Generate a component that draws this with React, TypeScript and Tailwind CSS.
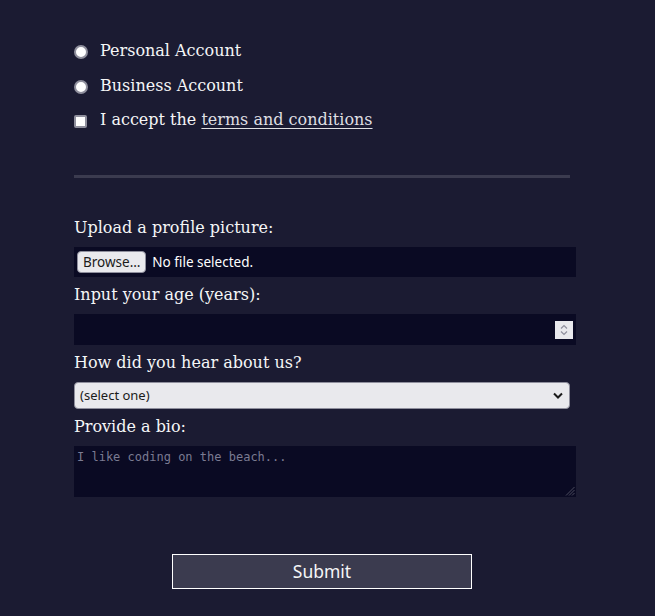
import React from 'react';

const serif = { fontFamily: '"DejaVu Serif", serif' };
const sans = { fontFamily: '"Noto Sans", "Open Sans", sans-serif' };

const Radio: React.FC = () => (
  <span className="w-[14px] h-[14px] rounded-full bg-white border-2 border-[#8f8f9d] shrink-0" />
);

const Check: React.FC = () => (
  <span className="w-[13px] h-[13px] rounded-[2px] bg-white border-2 border-[#8f8f9d] shrink-0" />
);

const Label: React.FC<{ text: string; className?: string }> = ({ text, className = '' }) => (
  <div className={`h-[19px] leading-[19px] text-[16px] text-[#f5f6f7] ${className}`} style={serif}>
    {text}
  </div>
);

export default function App() {
  return (
    <div className="w-[655px] h-[616px] bg-[#1b1b32] overflow-hidden">
      <div className="ml-[74px] w-[502px] pt-[34px] flex flex-col">

        {/* Account type */}
        <div className="w-[496px] flex flex-col border-b-[3px] border-[#3b3b4f] pb-[36px]">
          <div className="h-[35px] flex items-center gap-[12px]">
            <Radio />
            <span className="text-[16px] text-[#f5f6f7] -mt-[2px]" style={serif}>Personal Account</span>
          </div>
          <div className="h-[35px] flex items-center gap-[12px]">
            <Radio />
            <span className="text-[16px] text-[#f5f6f7] -mt-[2px]" style={serif}>Business Account</span>
          </div>
          <div className="h-[35px] flex items-center gap-[13px]">
            <Check />
            <span className="text-[16px] text-[#f5f6f7] -mt-[3px]" style={serif}>
              I accept the <a className="underline underline-offset-[3px] text-[#dfdfe2]">terms and conditions</a>
            </span>
          </div>
        </div>

        {/* Profile details */}
        <div className="flex flex-col pt-[40px]">
          <Label text="Upload a profile picture:" />
          <div className="mt-[10px] h-[30px] bg-[#0a0a23] flex items-center pl-[3px] gap-[6px]">
            <span
              className="h-[22px] px-[5px] flex items-center rounded-[4px] bg-[#e9e9ed] border border-[#8f8f9d] text-[13.5px] text-[#1b1b1b]"
              style={sans}
            >
              Browse…
            </span>
            <span className="text-[13.5px] text-white" style={sans}>No file selected.</span>
          </div>

          <Label text="Input your age (years):" className="mt-[8px]" />
          <div className="mt-[10px] h-[31px] bg-[#0a0a23] flex items-center justify-end pr-[3px]">
            <span className="w-[18px] h-[18px] bg-[#e9e9ed] flex flex-col items-center justify-center gap-[2px]">
              <svg width="8" height="5" viewBox="0 0 8 5" fill="none" stroke="#8f8f9d" strokeWidth="1.2">
                <path d="M1 4.5 L4 1.5 L7 4.5" />
              </svg>
              <svg width="8" height="5" viewBox="0 0 8 5" fill="none" stroke="#8f8f9d" strokeWidth="1.2">
                <path d="M1 0.5 L4 3.5 L7 0.5" />
              </svg>
            </span>
          </div>

          <Label text="How did you hear about us?" className="mt-[8px]" />
          <div
            className="mt-[10px] w-[496px] h-[27px] bg-[#e9e9ed] border border-[#8f8f9d] rounded-[4px] flex items-center justify-between pl-[5px] pr-[6px] text-[13px] text-[#1b1b1b]"
            style={sans}
          >
            <span>(select one)</span>
            <svg width="10" height="7" viewBox="0 0 10 7" fill="none" stroke="#1b1b1b" strokeWidth="2">
              <path d="M1 1.5 L5 5.5 L9 1.5" />
            </svg>
          </div>

          <Label text="Provide a bio:" className="mt-[8px]" />
          <div className="mt-[10px] relative h-[51px]">
            <textarea
              className="w-full h-full bg-[#0a0a23] border border-[#0a0a23] resize-none pl-[2px] pt-[2px] text-[12px] leading-[17px] text-white placeholder:text-[#7b7b92] outline-none"
              style={{ fontFamily: '"DejaVu Sans Mono", monospace' }}
              placeholder="I like coding on the beach..."
            />
            <svg className="absolute right-[1px] bottom-[1px]" width="10" height="10" viewBox="0 0 10 10" stroke="#4a4a5e" strokeWidth="1">
              <path d="M9.5 1 L1 9.5 M9.5 4 L4 9.5 M9.5 7 L7 9.5" />
            </svg>
          </div>
        </div>

        {/* Submit */}
        <div className="flex pl-[98px] mt-[57px]">
          <button
            className="w-[300px] h-[35px] bg-[#3b3b4f] border border-white text-[17.5px] text-[#f5f6f7] flex items-center justify-center"
            style={sans}
          >
            Submit
          </button>
        </div>
      </div>
    </div>
  );
}
